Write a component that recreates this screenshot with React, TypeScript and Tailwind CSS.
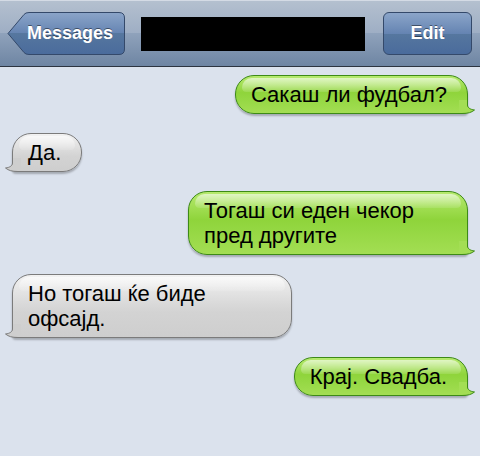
import React from "react";

type Msg = { id: number; text: string; mine: boolean };

const messages: Msg[] = [
  { id: 1, text: "Сакаш ли фудбал?", mine: true },
  { id: 2, text: "Да.", mine: false },
  { id: 3, text: "Тогаш си еден чекор пред другите", mine: true },
  { id: 4, text: "Но тогаш ќе биде офсајд.", mine: false },
  { id: 5, text: "Крај. Свадба.", mine: true },
];

// little curled tail at the bottom corner of a bubble
function Tail({ mine }: { mine: boolean }) {
  const fill = mine ? "#a3de54" : "#cecece";
  const stroke = mine ? "#3d8a17" : "#7b7b7b";
  const outer = "M12.5 6 L12.5 11 C12.5 13.5, 15 15.5, 19.5 16 C16.5 18.5, 13 19.5, 7 19.5 L4 19.5";
  return (
    <svg
      width="20"
      height="20"
      viewBox="0 0 20 20"
      className={
        mine
          ? "absolute bottom-[-1px] right-[-8px]"
          : "absolute bottom-[-1px] left-[-8px] -scale-x-100"
      }
    >
      <path d={outer + " L4 6 Z"} fill={fill} />
      <path d={outer} fill="none" stroke={stroke} strokeWidth="1" />
    </svg>
  );
}

function Bubble({ msg }: { msg: Msg }) {
  return (
    <div className={msg.mine ? "flex justify-end pr-[12px]" : "flex justify-start pl-[12px]"}>
      <div
        className={
          "relative max-w-[280px] rounded-[19px] border pl-[15px] pr-[20px] py-[6px] text-[22px] leading-[25px] text-black shadow-[0_2px_2px_rgba(0,0,0,0.25)] " +
          (msg.mine
            ? "rounded-br-[4px] border-[#3d8a17] bg-[linear-gradient(#b6ea6f,#8fd43b_45%,#94d742_60%,#a3de53)]"
            : "rounded-bl-[4px] border-[#7b7b7b] bg-[linear-gradient(#f2f2f2,#dadada_45%,#d3d3d3_60%,#cecece)]")
        }
      >
        <div className="absolute left-[6px] right-[6px] top-[2px] h-[14px] rounded-t-[14px] rounded-b-[6px] bg-[linear-gradient(rgba(255,255,255,0.6),rgba(255,255,255,0.1))]" />
        <Tail mine={msg.mine} />
        <p className="relative">{msg.text}</p>
      </div>
    </div>
  );
}

export default function App() {
  return (
    <div className="h-[456px] w-full overflow-hidden bg-[#dbe2ed] font-['Liberation_Sans',Arial,sans-serif]">
      {/* Nav bar */}
      <div className="flex h-[67px] items-center border-t border-t-[#d4dbe5] border-b border-b-[#2c3440] bg-[linear-gradient(#b4c0cf,#9eaec4_50%,#8fa2bb_50%,#6e85a3)] pl-[7px]">
        <button className="relative flex h-[43px] w-[118px] items-center pl-[20px]">
          <svg width="118" height="43" viewBox="0 0 118 43" className="absolute left-0 top-0">
            <defs>
              <linearGradient id="back" x1="0" y1="0" x2="0" y2="1">
                <stop offset="0" stopColor="#8ba5c9" />
                <stop offset="0.5" stopColor="#6584b2" />
                <stop offset="0.5" stopColor="#56779f" />
                <stop offset="1" stopColor="#4a6b9c" />
              </linearGradient>
            </defs>
            <path
              d="M1 21.5 L17 2.5 Q18.5 0.5 22 0.5 L112 0.5 Q117.5 0.5 117.5 6 L117.5 37 Q117.5 42.5 112 42.5 L22 42.5 Q18.5 42.5 17 40.5 Z"
              fill="url(#back)"
              stroke="#34496a"
              strokeWidth="1"
            />
          </svg>
          <span className="relative text-[18px] font-bold text-white [text-shadow:0_-1px_0_rgba(0,0,0,0.45)]">
            Messages
          </span>
        </button>
        <div className="ml-[16px] h-[34px] w-[224px] bg-black" />
        <button className="ml-[18px] flex h-[43px] w-[89px] items-center justify-center rounded-[6px] border border-[#34496a] bg-[linear-gradient(#8ba5c9,#6584b2_50%,#56779f_50%,#4a6b9c)] text-[18px] font-bold text-white [text-shadow:0_-1px_0_rgba(0,0,0,0.45)]">
          Edit
        </button>
      </div>

      {/* Messages */}
      <div className="flex flex-col gap-[19px] pt-[8px]">
        {messages.map((m) => (
          <Bubble key={m.id} msg={m} />
        ))}
      </div>
    </div>
  );
}
